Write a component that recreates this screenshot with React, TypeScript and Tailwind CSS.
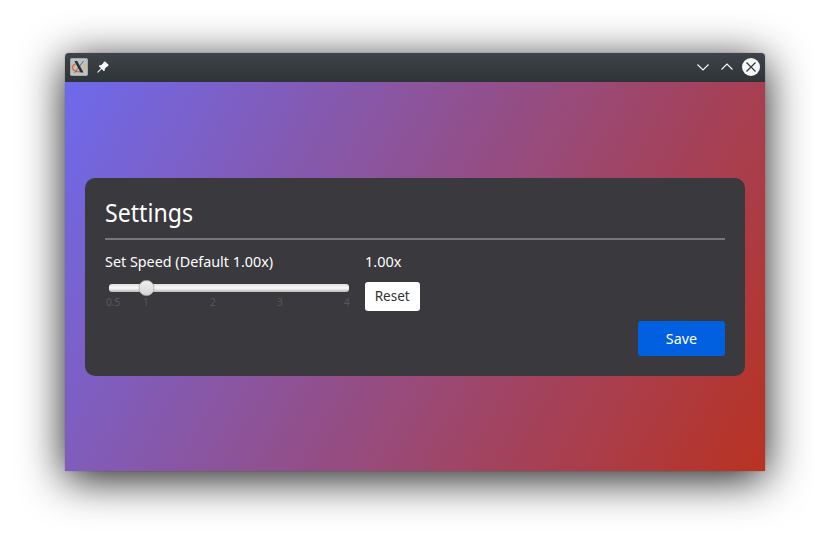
import React from "react";

const ticks = [
  { label: "0.5", pad: "left-[-3px]" },
  { label: "1", pad: "left-[34px]" },
  { label: "2", pad: "left-[101px]" },
  { label: "3", pad: "left-[168px]" },
  { label: "4", pad: "left-[235px]" },
];

function AppIcon() {
  return (
    <svg width="18" height="18" viewBox="0 0 18 18">
      <rect x="0.5" y="0.5" width="17" height="17" rx="1" fill="#bdc2c5" stroke="#a3a9ad" />
      <path d="M5.500 6C1.800 7.300 1.500 10.500 4 12.300c2 1.400 5 1.500 7 1" fill="none" stroke="#e5673a" strokeWidth="1.500" />
      <path d="M12 13c4.500-1.500 5-5.300 1.500-7" fill="none" stroke="#dfb578" strokeWidth="1.300" />
      <path d="M13.500 3 4.500 15" stroke="#666a6d" strokeWidth="1" />
      <path d="M4.300 3h2.900l6.300 11.500h-2.900z" fill="#2c3032" />
    </svg>
  );
}

function PinIcon() {
  return (
    <svg width="12" height="12" viewBox="0 0 12 12" fill="#fcfcfc">
      <path d="M8.200 .5 11.500 3.800 11.200 5.200 10 5.600 7.700 7.900 7.800 9.600 6.900 10.300 4.700 8.100 1.200 11.500.3 11.700.5 10.800 3.900 7.300 1.700 5.100 2.400 4.200 4.100 4.300 6.400 2 6.800.8z" />
    </svg>
  );
}

function TitleBar() {
  return (
    <div className="flex h-[29px] items-center bg-linear-to-b from-[#3d434a] to-[#2f3437] px-[5px] pb-px">
      <AppIcon />
      <div className="ml-[9px]">
        <PinIcon />
      </div>
      <div className="ml-auto flex items-center gap-[6px]">
        <svg width="18" height="18" viewBox="0 0 18 18" fill="none" stroke="#fcfcfc" strokeWidth="1.100">
          <path d="M3.500 6.500 9 12l5.500-5.500" />
        </svg>
        <svg width="18" height="18" viewBox="0 0 18 18" fill="none" stroke="#fcfcfc" strokeWidth="1.100">
          <path d="M3.500 11.500 9 6l5.500 5.500" />
        </svg>
        <svg width="18" height="18" viewBox="0 0 18 18" fill="none">
          <circle cx="9" cy="9" r="9" fill="#f5f6f6" />
          <path d="m4.500 4.500 9 9m0-9-9 9" stroke="#31363b" strokeWidth="1.200" />
        </svg>
      </div>
    </div>
  );
}

function SpeedSlider() {
  return (
    <div className="relative mt-[13px] ml-1 h-2 w-[240px] rounded-[3px] bg-linear-to-b from-[#dedede] via-[#fbfbfb] to-[#bababa]">
      <div className="absolute top-[-4px] left-[29px] size-4 translate-x-[0.5px] rounded-full border border-[#b4b4b4] bg-linear-to-b from-[#f0f0f0] to-[#d5d5d5]" />
      {ticks.map((t) => (
        <span key={t.label} className={`absolute top-[11px] origin-left scale-x-[0.93] text-[11px] leading-[14px] text-[#58575b] ${t.pad}`}>
          {t.label}
        </span>
      ))}
    </div>
  );
}

export default function App() {
  return (
    <div className="h-[548px] w-[830px] overflow-hidden bg-white pt-[53px] pl-[65px] font-['Noto_Sans',sans-serif] text-white">
      <div className="h-[418px] w-[700px] rounded-t-[4px] shadow-[0_0_1px_rgba(0,0,0,0.5),0_8px_44px_rgba(0,0,0,0.9)]">
        <div className="h-full overflow-hidden rounded-t-[4px]">
          <TitleBar />
          <div className="h-[389px] bg-[linear-gradient(119.06deg,#6e6aec,#b93221)] px-5 pt-24">
            <main className="flex h-[198px] flex-col rounded-[10px] bg-[#3a393d] px-5 pb-5">
              <h1 className="h-[60px] origin-left scale-x-[0.925] pt-[16px] text-[25px] leading-[36px]">Settings</h1>
              <div className="h-[2px] shrink-0 bg-[#77767a]" />
              <div className="flex pt-3">
                <div className="w-[260px]">
                  <div className="h-[19px] origin-left scale-x-[0.957] text-[15px] leading-[19px] whitespace-nowrap">Set Speed (Default 1.00x)</div>
                  <SpeedSlider />
                </div>
                <div>
                  <div className="h-[19px] origin-left scale-x-[0.965] text-[15px] leading-[19px]">1.00x</div>
                  <button className="mt-[11px] flex h-[29px] w-[55px] items-center justify-center rounded-[3px] bg-white pb-px text-[#333]">
                    <span className="scale-x-[0.965] text-[14px] leading-[28px]">Reset</span>
                  </button>
                </div>
              </div>
              <button className="mt-auto flex h-[35px] w-[87px] items-center justify-center self-end rounded-[3px] bg-[#0060df]">
                <span className="scale-x-[0.95] text-[15px] leading-[35px]">Save</span>
              </button>
            </main>
          </div>
        </div>
      </div>
    </div>
  );
}
